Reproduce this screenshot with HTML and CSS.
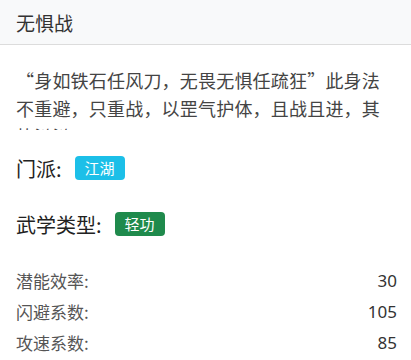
FILE: index.html
```html
<!DOCTYPE html>
<html lang="zh-CN">
<head>
  <meta charset="UTF-8" />
  <title>无惧战</title>
  <link rel="stylesheet" href="styles.css">
</head>
<body>

  <div class="skill-header">无惧战</div>

  <div class="skill-body">
    <p class="skill-desc">“身如铁石任风刀，无畏无惧任疏狂”此身法不重避，只重战，以罡气护体，且战且进，其势汹汹。</p>

    <div class="skill-field">
      <span class="field-label">门派:</span>
      <span class="tag tag-info">江湖</span>
    </div>

    <div class="skill-field">
      <span class="field-label">武学类型:</span>
      <span class="tag tag-success">轻功</span>
    </div>

    <div class="stat-list">
      <div class="stat-row"><span>潜能效率:</span><span class="stat-value">30</span></div>
      <div class="stat-row"><span>闪避系数:</span><span class="stat-value">105</span></div>
      <div class="stat-row"><span>攻速系数:</span><span class="stat-value">85</span></div>
    </div>
  </div>

</body>
</html>
```

FILE: styles.css
```css
body {
  margin: 0;
  font-family: "Noto Sans CJK SC", "Noto Sans", sans-serif;
  color: #333;
  background: #fff;
}
.skill-header {
  height: 44px;
  padding: 0 16px;
  display: flex;
  align-items: center;
  font-size: 19px;
  background-color: #f8f9fa;
  border-bottom: 1px solid #dcdcdc;
}
.skill-body {
  padding: 0 14px 0 16px;
}
.skill-desc {
  margin: 21px 0 0;
  font-size: 18px;
  letter-spacing: 0.2px;
  line-height: 28px;
  max-height: 64px;
  overflow: hidden;
  color: #444;
}
.skill-field {
  display: flex;
  align-items: center;
  height: 28px;
  margin-top: 24px;
  font-size: 20px;
  color: #222;
}
.skill-field + .skill-field {
  margin-top: 28px;
}
.field-label {
  margin-right: 13px;
}
.tag {
  display: inline-block;
  padding: 0 10px;
  height: 24px;
  line-height: 24px;
  font-size: 15px;
  color: #fff;
  border-radius: 4px;
}
.tag-info {
  background-color: #1cbfe8;
}
.tag-success {
  background-color: #1f8a4c;
}
.stat-list {
  margin-top: 27px;
}
.stat-row {
  display: flex;
  justify-content: space-between;
  font-size: 17px;
  line-height: 31px;
  color: #555;
}
.stat-value {
  font-family: "Noto Sans", sans-serif;
  color: #333;
}
```
